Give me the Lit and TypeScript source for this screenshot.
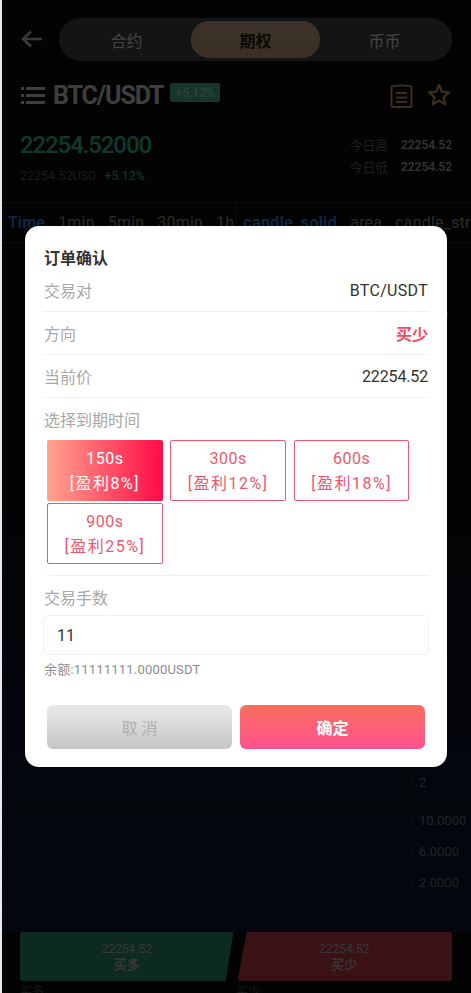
import { LitElement, html, css } from "lit";
import { customElement } from "lit/decorators.js";

const OPTIONS = [
  { t: "150s", p: "[盈利8%]", active: true },
  { t: "300s", p: "[盈利12%]", active: false },
  { t: "600s", p: "[盈利18%]", active: false },
  { t: "900s", p: "[盈利25%]", active: false },
];

@customElement("app-root")
export class AppRoot extends LitElement {
  static styles = css`
    :host {
      display: block;
      height: 993px;
      overflow: hidden;
      background: #e2e8f6;
      padding-left: 2px;
      box-sizing: border-box;
      position: relative;
      font-family: Roboto, "Noto Sans CJK SC", sans-serif;
    }
    * { box-sizing: border-box; }
    .screen {
      height: 993px;
      display: flex;
      flex-direction: column;
      background: #0b0b0b;
      color: #fff;
      overflow: hidden;
    }
    .nav {
      display: flex;
      align-items: center;
      padding: 18px 19px 0 19px;
      gap: 16px;
    }
    .back { width: 22px; height: 18px; flex: none; display: block; margin-top: -1px; }
    .tabs {
      flex: 1;
      height: 43px;
      border-radius: 22px;
      background: #444;
      padding: 3px;
      display: flex;
    }
    .tab {
      flex: 1;
      border-radius: 18px;
      display: flex;
      align-items: center;
      justify-content: center;
      font-size: 16px;
      color: #e0e0e0;
    }
    .tab.on {
      background: linear-gradient(180deg, #c7a68a, #c89e74);
      color: #222;
      font-weight: 700;
    }
    .pair {
      display: flex;
      align-items: center;
      padding: 0 20px 0 19px;
      margin-top: 20px;
      height: 28px;
    }
    .list { width: 24px; height: 18px; flex: none; margin-right: 8px; }
    .sym { font-size: 25px; font-weight: 700; color: #d0d0d0; letter-spacing: -1.1px; }
    .badge {
      margin-left: 7px;
      width: 50px;
      height: 19px;
      border-radius: 2px;
      background: #4cb398;
      color: #95e0c8;
      font-size: 12px;
      font-weight: 500;
      display: flex;
      align-items: center;
      justify-content: center;
      margin-bottom: 5px;
    }
    .pair-icons { margin-left: auto; display: flex; align-items: center; gap: 14px; }
    .pair-icons svg { display: block; }
    .quote {
      display: flex;
      justify-content: space-between;
      padding: 0 19px 0 18px;
      margin-top: 20px;
      height: 73px;
      flex: none;
    }
    .price { font-size: 24px; line-height: 32px; font-weight: 500; color: #30c090; letter-spacing: -1.1px; }
    .sub { font-size: 12.5px; line-height: 16px; margin-top: 7px; color: #5a5a5a; }
    .sub b { font-weight: 400; color: #30c090; margin-left: 5px; }
    .hl {
      display: grid;
      grid-template-columns: auto auto;
      column-gap: 13px;
      row-gap: 3px;
      font-size: 12px;
      line-height: 19px;
      margin-top: 7px;
      align-content: start;
    }
    .hl span { color: #666; font-size: 12.7px; }
    .hl b { color: #b4b4b4; font-weight: 500; }
    .periods {
      border-top: 1px solid #2a2a2a;
      border-bottom: 1px solid #2a2a2a;
      height: 41px;
      display: flex;
      flex: none;
      font-size: 16px;
      letter-spacing: 0.2px;
      color: #909090;
      white-space: nowrap;
    }
    .group { display: flex; align-items: center; gap: 13px; }
    .group.a { padding: 0 1px 0 6px; border-right: 1px solid #2a2a2a; }
    .group.b { padding-left: 7px; }
    .sel { color: #2a8cff; font-weight: 500; }
    .group.b .sel { letter-spacing: 0.4px; }
    .chart {
      flex: 1;
      display: flex;
      flex-direction: column;
      min-height: 0;
      background: linear-gradient(180deg, #0b0b0b 0, #0b0b0b 30%, #0a1530 85%);
    }
    .pane { flex: none; display: flex; }
    .pane-main { height: 462px; }
    .pane-vol { height: 101px; border-top: 1px solid #1f2420; }
    .pane-sub { height: 101px; border-top: 1px solid #1f2420; border-bottom: 1px solid #1f2420; }
    .plot { width: 410px; flex: none; }
    .pane-vol .plot { padding-top: 46px; }
    .dot { height: 31px; border-bottom: 1px dotted #3a3a30; }
    .pane-sub .dot:first-child { height: 16px; }
    .axis {
      flex: 1;
      border-left: 1px solid #1f2420;
      font-size: 13px;
      color: #777;
      padding-left: 6px;
    }
    .pane-main .axis { padding-top: 64px; line-height: 16px; }
    .pane-vol .axis { padding-top: 69px; line-height: 16px; }
    .pane-sub .axis { line-height: 31px; }
    .axis-list { margin-top: -2px; }
    .fill { flex: 1; }
    .trade {
      flex: none;
      height: 61px;
      padding: 0 19px 0 18px;
      background: #0b0b0b;
    }
    .btns { display: flex; gap: 4px; height: 49px; }
    .bt {
      flex: 1;
      display: flex;
      flex-direction: column;
      align-items: center;
      justify-content: center;
      font-size: 12px;
      line-height: 16px;
      color: #b5b5b5;
      border-radius: 3px;
    }
    .bt b { font-weight: 700; font-size: 13px; }
    .buy { background: #2d8d6f; clip-path: polygon(0 0, 100% 0, 96.3% 100%, 0 100%); padding-top: 1px; }
    .sell { background: #c23a46; clip-path: polygon(4.2% 0, 100% 0, 100% 100%, 0 100%); padding: 1px 1px 0 0; }
    .names { display: flex; font-size: 12px; color: #555; margin-top: 1px; }
    .names span { flex: 1; }

    .backdrop {
      position: absolute;
      left: 2px;
      top: 0;
      right: 0;
      bottom: 0;
      background: rgba(0, 0, 0, 0.7);
      z-index: 5;
    }
    .dialog {
      position: absolute;
      left: 25px;
      top: 226px;
      width: 422px;
      height: 541px;
      z-index: 6;
      border-radius: 14px;
      background: #fff;
      padding: 0 18px 0 18px;
      display: flex;
      flex-direction: column;
    }
    .title {
      font-size: 16px;
      font-weight: 700;
      color: #333;
      line-height: 20px;
      margin-top: 23px;
      margin-left: 1px;
    }
    .row {
      display: flex;
      justify-content: space-between;
      align-items: center;
      height: 43px;
      border-bottom: 1px solid #f2f2f2;
      font-size: 16px;
      color: #a8a8a8;
      padding: 0 1px;
    }
    .row:first-of-type { height: 33px; padding-bottom: 3px; }
    .row b { font-weight: 400; color: #333; }
    .row b.pair-name { letter-spacing: 0.3px; }
    .row b.num { letter-spacing: -0.15px; }
    .row b.red { color: #f5475f; font-weight: 700; }
    .label {
      font-size: 16px;
      color: #a8a8a8;
      line-height: 20px;
      margin-left: 1px;
    }
    .label.first { margin-top: 13px; }
    .options {
      display: flex;
      flex-wrap: wrap;
      gap: 2px 7.7px;
      margin: 9px 0 0 4px;
      padding-bottom: 11px;
      border-bottom: 1px solid #f2f2f2;
    }
    .opt {
      width: 115.7px;
      height: 61px;
      border: 1px solid #f0566c;
      border-radius: 2px;
      color: #f0566c;
      font-size: 16px;
      line-height: 25px;
      letter-spacing: 0.5px;
      padding-top: 4.5px;
      text-align: center;
    }
    .opt .pr { letter-spacing: 1.5px; }
    .opt.on {
      border: none;
      padding-top: 5.5px;
      color: #fff;
      background: linear-gradient(90deg, #ffa58e, #ff0a46);
    }
    .label.qty { margin-top: 13px; }
    .input {
      margin-top: 6px;
      height: 40px;
      border: 1px solid #efefef;
      border-radius: 6px;
      padding-left: 13px;
      display: flex;
      align-items: center;
      font-size: 16px;
      color: #333;
    }
    .bal { font-size: 13px; letter-spacing: 0.2px; color: #8c8c8c; line-height: 16px; margin: 7px 0 0 1px; }
    .actions { display: flex; gap: 8px; margin: 27px 0 0 4px; width: 378px; }
    .act {
      flex: 1;
      height: 44px;
      border-radius: 6px;
      display: flex;
      align-items: center;
      justify-content: center;
      font-size: 16px;
    }
    .cancel {
      background: linear-gradient(180deg, #e9e9e9, #c5c6c8);
      color: #b0b0b0;
    }
    .ok {
      background: linear-gradient(180deg, #fa6e5e, #ff5290);
      color: #fff;
      font-weight: 700;
    }
  `;

  render() {
    return html`
      <div class="screen">
        <div class="nav">
          <svg class="back" viewBox="0 0 22 18" fill="none" stroke="#c9c0b4" stroke-width="2.6">
            <path d="M21 9H2M10 1.500 2 9l8 7.500" />
          </svg>
          <div class="tabs">
            <div class="tab">合约</div>
            <div class="tab on">期权</div>
            <div class="tab">币币</div>
          </div>
        </div>
        <div class="pair">
          <svg class="list" viewBox="0 0 24 18" fill="#d0d0d0">
            <rect x="0" y="1" width="3" height="3" />
            <rect x="5" y="1" width="19" height="3" />
            <rect x="0" y="8" width="3" height="3" />
            <rect x="5" y="8" width="19" height="3" />
            <rect x="0" y="15" width="3" height="3" />
            <rect x="5" y="15" width="19" height="3" />
          </svg>
          <div class="sym">BTC/USDT</div>
          <div class="badge">+5.12%</div>
          <div class="pair-icons">
            <svg width="23" height="25" viewBox="0 0 23 25" fill="none" stroke="#c79a5e" stroke-width="2">
              <path d="M7 3H3a1.500 1.500 0 0 0-1.500 1.500v18A1.500 1.500 0 0 0 3 24h17a1.500 1.500 0 0 0 1.500-1.500v-18A1.500 1.500 0 0 0 20 3h-4" />
              <path d="M7 2.500h9M6 10h11M6 14.500h11M6 19h11" />
            </svg>
            <svg width="24" height="24" viewBox="0 0 24 24" fill="none" stroke="#c79a5e" stroke-width="2.200" stroke-linejoin="round">
              <path d="M12 2l2.900 6.700 7.100.7-5.400 4.800 1.600 7.100L12 17.600l-6.200 3.700 1.600-7.100L2 9.400l7.100-.7z" />
            </svg>
          </div>
        </div>
        <div class="quote">
          <div>
            <div class="price">22254.52000</div>
            <div class="sub">22254.52USD <b>+5.12%</b></div>
          </div>
          <div class="hl">
            <span>今日高</span><b>22254.52</b>
            <span>今日低</span><b>22254.52</b>
          </div>
        </div>
        <div class="periods">
          <div class="group a">
            <span class="sel">Time</span><span>1min</span><span>5min</span><span>30min</span><span>1h</span>
          </div>
          <div class="group b">
            <span class="sel">candle_solid</span><span>area</span><span>candle_stroke</span>
          </div>
        </div>
        <div class="chart">
          <div class="pane pane-main">
            <div class="plot"></div>
            <div class="axis">2000</div>
          </div>
          <div class="pane pane-vol">
            <div class="plot"><div class="dot"></div></div>
            <div class="axis">2</div>
          </div>
          <div class="pane pane-sub">
            <div class="plot">
              <div class="dot"></div>
              <div class="dot"></div>
              <div class="dot"></div>
            </div>
            <div class="axis">
              <div class="axis-list">10.0000<br />6.0000<br />2.0000</div>
            </div>
          </div>
          <div class="fill"></div>
        </div>
        <div class="trade">
          <div class="btns">
            <div class="bt buy">22254.52<b>买多</b></div>
            <div class="bt sell">22254.52<b>买少</b></div>
          </div>
          <div class="names"><span>买多</span><span>买少</span></div>
        </div>
      </div>
      <div class="backdrop"></div>
      <div class="dialog">
        <div class="title">订单确认</div>
        <div class="row"><span>交易对</span><b class="pair-name">BTC/USDT</b></div>
        <div class="row"><span>方向</span><b class="red">买少</b></div>
        <div class="row"><span>当前价</span><b class="num">22254.52</b></div>
        <div class="label first">选择到期时间</div>
        <div class="options">
          ${OPTIONS.map(
            (o) => html`<div class="opt ${o.active ? "on" : ""}">${o.t}<br /><span class="pr">${o.p}</span></div>`
          )}
        </div>
        <div class="label qty">交易手数</div>
        <div class="input">11</div>
        <div class="bal">余额:11111111.0000USDT</div>
        <div class="actions">
          <div class="act cancel">取 消</div>
          <div class="act ok">确定</div>
        </div>
      </div>
    `;
  }
}
